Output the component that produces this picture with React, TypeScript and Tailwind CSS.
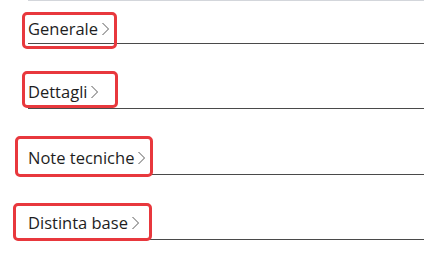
import React from 'react';

type Section = {
  label: string;
  height: string;
  pad: string;
};

const sections: Section[] = [
  { label: 'Generale', height: 'h-[43px]', pad: 'pb-[3px]' },
  { label: 'Dettagli', height: 'h-[65px]', pad: 'pb-[5px]' },
  { label: 'Note tecniche', height: 'h-[66px]', pad: 'pb-[5px]' },
  { label: 'Distinta base', height: 'h-[65px]', pad: 'pb-[5px]' },
];

// annotation boxes drawn over the headers
const highlights = [
  'left-[22px] top-[12px] w-[95px] h-[37px]',
  'left-[22px] top-[71px] w-[96px] h-[37px]',
  'left-[15px] top-[136px] w-[138px] h-[41px]',
  'left-[13px] top-[203px] w-[139px] h-[38px]',
];

function Chevron() {
  return (
    <svg width="9" height="14" viewBox="0 0 9 14" className="ml-[3px] mb-[1px] text-[#5a5a5a]">
      <polyline points="1.5,1 7.5,7 1.5,13" fill="none" stroke="currentColor" strokeWidth="1" />
    </svg>
  );
}

export default function App() {
  return (
    <div className="relative w-[424px] h-[260px] bg-white overflow-hidden" style={{ fontFamily: '"Open Sans", "Noto Sans", sans-serif' }}>
      <div className="ml-[28px] border-t border-[#d3d6db]" />
      {sections.map(s => (
        <div key={s.label} className={`ml-[28px] ${s.height} ${s.pad} flex items-end border-b border-[#4a4a4a]`}>
          <button className="flex items-center text-[16.5px] leading-[22px] text-[#1e1e1e]">
            {s.label}
            <Chevron />
          </button>
        </div>
      ))}
      {highlights.map((h, i) => (
        <span key={i} className={`absolute ${h} border-[3px] border-[#e8383d] rounded-[5px] pointer-events-none`} />
      ))}
    </div>
  );
}
